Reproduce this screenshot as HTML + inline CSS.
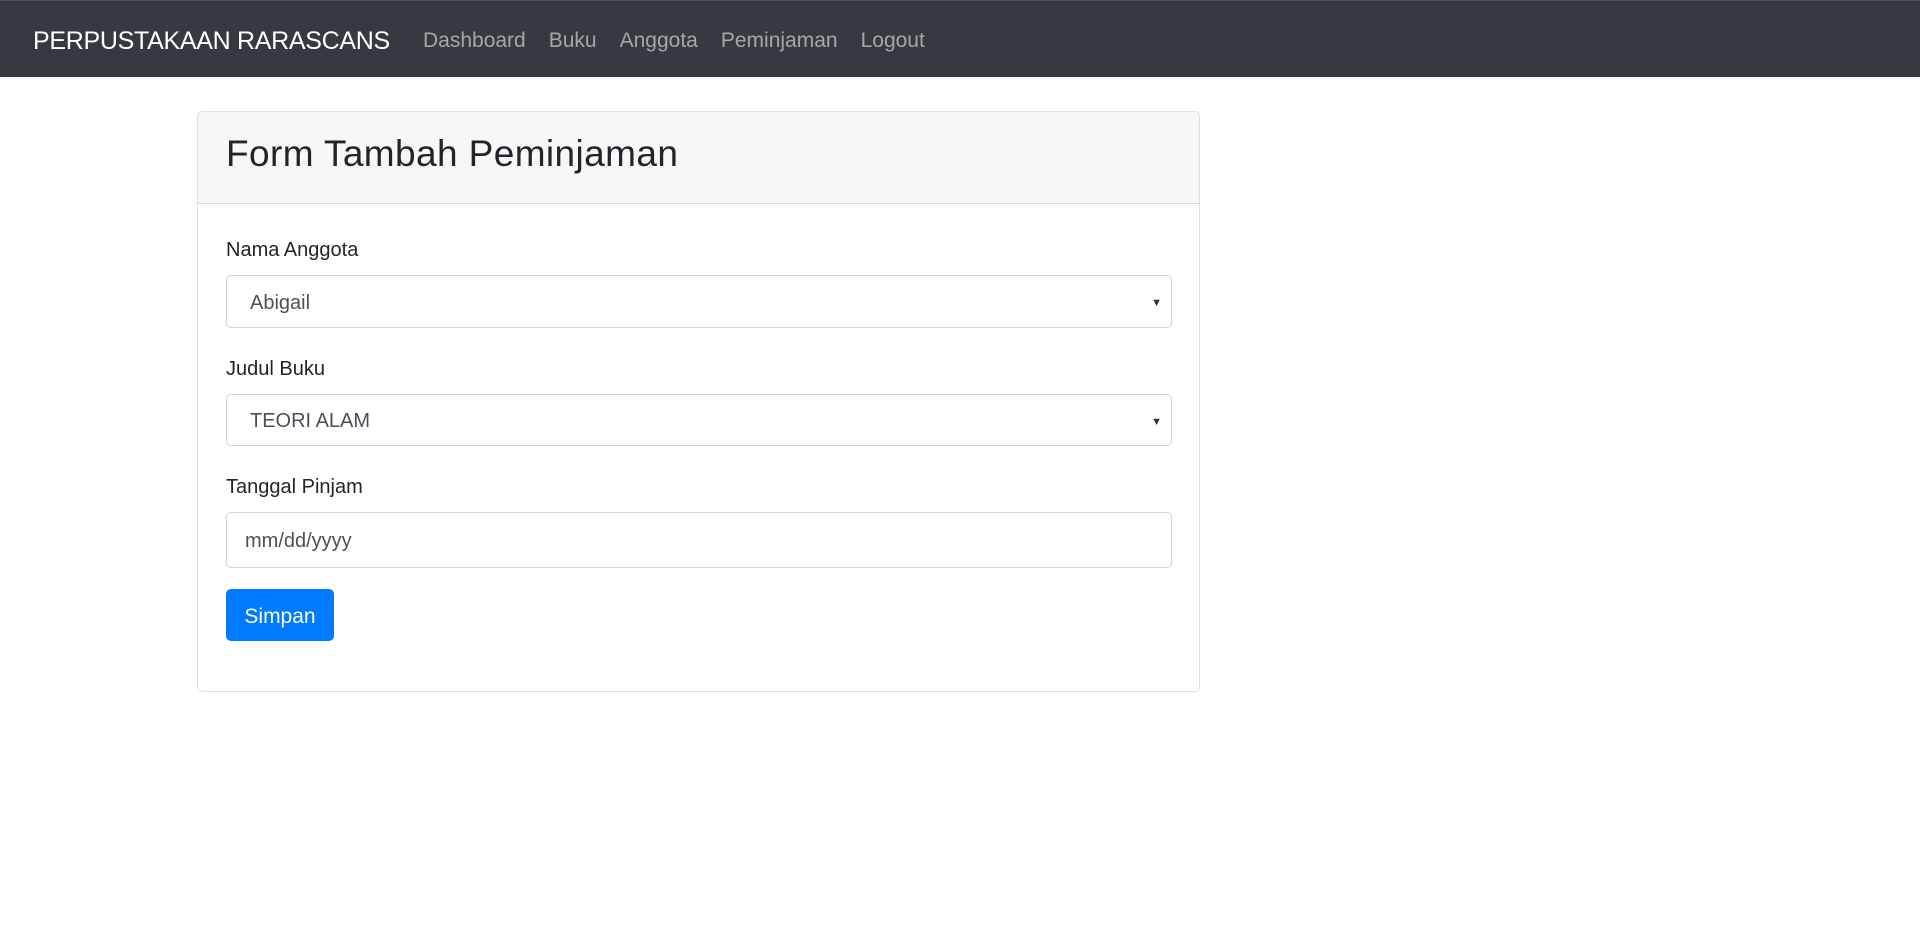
<!DOCTYPE html>
<html><head><meta charset="utf-8"><style>
*{box-sizing:border-box;margin:0;padding:0}
body{width:1920px;height:934px;background:#fff;font-family:"Liberation Sans",Arial,sans-serif;color:#212529;position:relative;overflow:hidden}
.nav{position:absolute;left:0;top:0;width:1920px;height:77px;background:#343a40;border-top:1px solid #4a5058}
.brand{position:absolute;left:33px;top:26px;font-size:25px;color:#fff;letter-spacing:-0.3px}
.links{position:absolute;left:423px;top:28px;font-size:21px;color:rgba(255,255,255,.55)}
.links span{margin-right:23px}
.card{position:absolute;left:197px;top:111px;width:1003px;height:581px;border:1px solid rgba(0,0,0,.125);border-radius:5px}
.ch{height:92px;background:#f7f7f7;border-bottom:1px solid rgba(0,0,0,.125);border-radius:5px 5px 0 0;padding:21px 28px;font-size:37px;letter-spacing:0.4px;font-weight:500}
.lbl{position:absolute;left:28px;font-size:20px}
.ctl{position:absolute;left:28px;width:946px;border:1px solid #ced4da;border-radius:5px;font-size:20px;color:#495057;padding-left:23px;padding-top:3px;display:flex;align-items:center}
.ctl .ar{position:absolute;right:9px;font-size:11px;color:#333}
.btn{position:absolute;left:28px;top:477px;width:108px;height:52px;background:#007bff;color:#fff;border-radius:5px;font-size:21px;padding-top:3px;display:flex;align-items:center;justify-content:center}
</style></head><body>
<div class="nav"><div class="brand">PERPUSTAKAAN RARASCANS</div>
<div class="links"><span>Dashboard</span><span>Buku</span><span>Anggota</span><span>Peminjaman</span><span>Logout</span></div></div>
<div class="card">
<div class="ch">Form Tambah Peminjaman</div>
<div class="lbl" style="top:127px">Nama Anggota</div>
<div class="ctl" style="top:163px;height:53px">Abigail<span class="ar">▼</span></div>
<div class="lbl" style="top:246px">Judul Buku</div>
<div class="ctl" style="top:282px;height:52px">TEORI ALAM<span class="ar">▼</span></div>
<div class="lbl" style="top:364px">Tanggal Pinjam</div>
<div class="ctl" style="top:400px;height:56px;padding-left:18px">mm/dd/yyyy</div>
<div class="btn">Simpan</div>
</div>
</body></html>
